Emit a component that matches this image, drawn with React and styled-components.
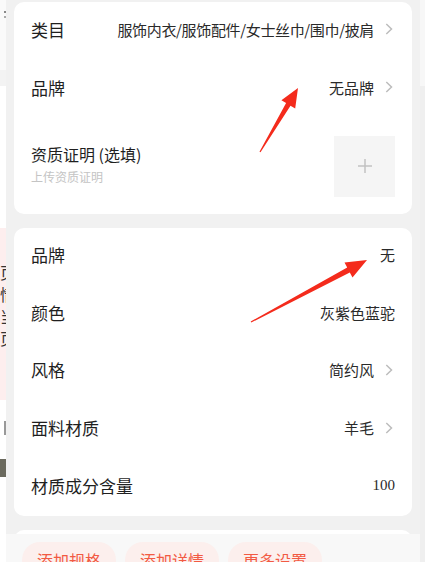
import React from "react";
import styled, { createGlobalStyle } from "styled-components";

const GlobalStyle = createGlobalStyle`
  html, body { margin: 0; padding: 0; height: 100%; overflow: hidden; background: #fff; }
  body { font-family: "Noto Sans CJK SC", "Noto Sans", sans-serif; }
  #root { height: 100%; }
`;

const Page = styled.div`
  position: relative;
  display: flex;
  width: 425px;
  height: 562px;
  overflow: hidden;
`;

const LeftStrip = styled.div`
  width: 6px;
  flex: none;
  display: flex;
  flex-direction: column;
  background: #fff;
`;

const StripBlock = styled.div`
  height: ${(p) => p.$h}px;
  flex: none;
  background: ${(p) => p.$bg || "#fff"};
  display: flex;
  flex-direction: column;
  align-items: flex-end;
  overflow: hidden;
  padding-top: ${(p) => p.$pt || 0}px;
  box-sizing: border-box;
`;

const StripChar = styled.span`
  font-size: 16px;
  line-height: 22px;
  color: #333;
  white-space: nowrap;
  display: block;
  width: 16px;
  flex: none;
  text-align: right;
  margin-right: -10px;
`;

const Mark = styled.div`
  width: ${(p) => p.$w}px;
  height: ${(p) => p.$h}px;
  background: ${(p) => p.$bg};
  margin-top: ${(p) => p.$mt || 0}px;
  flex: none;
`;

const Sheet = styled.div`
  width: 398px;
  flex: none;
  padding: 2px 8px 0;
  background: #f1f1f1;
  display: flex;
  flex-direction: column;
  gap: 14px;
`;

const RightStrip = styled.div`
  width: 5px;
  flex: none;
  display: flex;
  flex-direction: column;
  background: #efefef;
`;

const Card = styled.div`
  background: #fff;
  border-radius: 10px;
  padding: 0 17px;
  flex: none;
  min-height: ${(p) => p.$minH || 0}px;
`;

const Row = styled.div`
  display: flex;
  align-items: center;
  justify-content: space-between;
  box-sizing: border-box;
  height: ${(p) => p.$h}px;
  padding-bottom: 4px;
`;

const Label = styled.span`
  font-size: 17px;
  color: #1f1f1f;
  white-space: nowrap;
`;

const ValueGroup = styled.div`
  display: flex;
  align-items: center;
`;

const Value = styled.span`
  font-size: 15px;
  color: #2a2a2a;
  white-space: nowrap;
  letter-spacing: ${(p) => (p.$tight ? "-0.35px" : "0")};
  font-family: ${(p) =>
    p.$serif ? `"Liberation Serif", serif` : `"Noto Sans CJK SC", sans-serif`};
`;

const ChevronSvg = styled.svg`
  width: 8px;
  height: 12px;
  margin-left: 11px;
  margin-right: 2px;
  flex: none;
`;

const Chevron = () => (
  <ChevronSvg viewBox="0 0 8 12">
    <path d="M1.3 1 L6.5 6 L1.3 11" fill="none" stroke="#bdbdbd" strokeWidth="1.5" />
  </ChevronSvg>
);

const QualRow = styled.div`
  display: flex;
  align-items: center;
  justify-content: space-between;
  height: 96px;
`;

const QualText = styled.div`
  display: flex;
  flex-direction: column;
  gap: 3px;
  margin-bottom: 4px;
`;

const QualTitle = styled.span`
  font-size: 16px;
  line-height: 22px;
  color: #1f1f1f;
`;

const QualSub = styled.span`
  font-size: 12px;
  line-height: 17px;
  color: #c4c4c4;
`;

const UploadBox = styled.div`
  width: 61px;
  height: 61px;
  background: #f5f5f5;
  display: flex;
  align-items: center;
  justify-content: center;
`;

const BottomBar = styled.div`
  position: absolute;
  top: 534px;
  left: 6px;
  width: 414px;
  height: 60px;
  background: #f8f8f8;
  box-sizing: border-box;
  padding: 8px 16px;
  display: flex;
  gap: 9px;
`;

const Pill = styled.div`
  height: 36px;
  padding: 0 15px;
  border-radius: 18px;
  background: #fcefed;
  color: #f25a43;
  font-size: 16px;
  display: flex;
  align-items: center;
  white-space: nowrap;
`;

const Overlay = styled.svg`
  position: absolute;
  left: 0;
  top: 0;
  width: 425px;
  height: 562px;
  pointer-events: none;
`;

function arrowPoints(tail, tip, headLen, headHalf, neckHalf, tailHalf) {
  const dx = tip[0] - tail[0];
  const dy = tip[1] - tail[1];
  const len = Math.hypot(dx, dy);
  const ux = dx / len, uy = dy / len;
  const nx = -uy, ny = ux;
  const bx = tip[0] - ux * headLen, by = tip[1] - uy * headLen;
  const pts = [
    [tail[0] + nx * tailHalf, tail[1] + ny * tailHalf],
    [bx + nx * neckHalf, by + ny * neckHalf],
    [bx + nx * headHalf, by + ny * headHalf],
    tip,
    [bx - nx * headHalf, by - ny * headHalf],
    [bx - nx * neckHalf, by - ny * neckHalf],
    [tail[0] - nx * tailHalf, tail[1] - ny * tailHalf],
  ];
  return pts.map((p) => p.map((v) => v.toFixed(1)).join(",")).join(" ");
}

const rows2 = [
  { label: "品牌", value: "无" },
  { label: "颜色", value: "灰紫色蓝驼" },
  { label: "风格", value: "简约风", chevron: true },
  { label: "面料材质", value: "羊毛", chevron: true },
  { label: "材质成分含量", value: "100", serif: true },
];

export default function App() {
  return (
    <>
      <GlobalStyle />
      <Page>
        <LeftStrip>
          <StripBlock $h={70} $bg="#fafafa" $pt={11}>
            <Mark $w={2} $h={2} $bg="#888" />
            <Mark $w={2} $h={2} $bg="#aaa" $mt={3} />
          </StripBlock>
          <StripBlock $h={16} $bg="#f3f3f3" />
          <StripBlock $h={142} $bg="#fff" />
          <StripBlock $h={172} $bg="#fdeeee" $pt={33}>
            <StripChar>页</StripChar>
            <StripChar>情</StripChar>
            <StripChar>当</StripChar>
            <StripChar>页</StripChar>
          </StripBlock>
          <StripBlock $h={162} $bg="#fff" $pt={21}>
            <Mark $w={2} $h={14} $bg="#999" />
            <Mark $w={6} $h={18} $bg="#6b6a5e" $mt={24} />
          </StripBlock>
        </LeftStrip>

        <Sheet>
          <Card>
            <Row $h={58}>
              <Label>类目</Label>
              <ValueGroup>
                <Value $tight>服饰内衣/服饰配件/女士丝巾/围巾/披肩</Value>
                <Chevron />
              </ValueGroup>
            </Row>
            <Row $h={58}>
              <Label>品牌</Label>
              <ValueGroup>
                <Value>无品牌</Value>
                <Chevron />
              </ValueGroup>
            </Row>
            <QualRow>
              <QualText>
                <QualTitle>资质证明 (选填)</QualTitle>
                <QualSub>上传资质证明</QualSub>
              </QualText>
              <UploadBox>
                <svg width="14" height="14" viewBox="0 0 14 14">
                  <path d="M7 0 V14 M0 7 H14" stroke="#c2c2c2" strokeWidth="1.5" fill="none" />
                </svg>
              </UploadBox>
            </QualRow>
          </Card>

          <Card>
            {rows2.map((r) => (
              <Row key={r.label} $h={57.6}>
                <Label>{r.label}</Label>
                <ValueGroup>
                  <Value $serif={r.serif}>{r.value}</Value>
                  {r.chevron && <Chevron />}
                </ValueGroup>
              </Row>
            ))}
          </Card>

          <Card $minH={60} />
        </Sheet>

        <RightStrip>
          <StripBlock $h={86} $bg="#f7f7f7" />
        </RightStrip>

        <BottomBar>
          <Pill>添加规格</Pill>
          <Pill>添加详情</Pill>
          <Pill>更多设置</Pill>
        </BottomBar>

        <Overlay viewBox="0 0 425 562">
          <polygon
            points={arrowPoints([260, 152], [298, 88], 19, 8, 2.6, 0.6)}
            fill="#f42b1c"
          />
          <polygon
            points={arrowPoints([251, 322], [367, 260], 21, 8.5, 2.8, 0.6)}
            fill="#f42b1c"
          />
        </Overlay>
      </Page>
    </>
  );
}
